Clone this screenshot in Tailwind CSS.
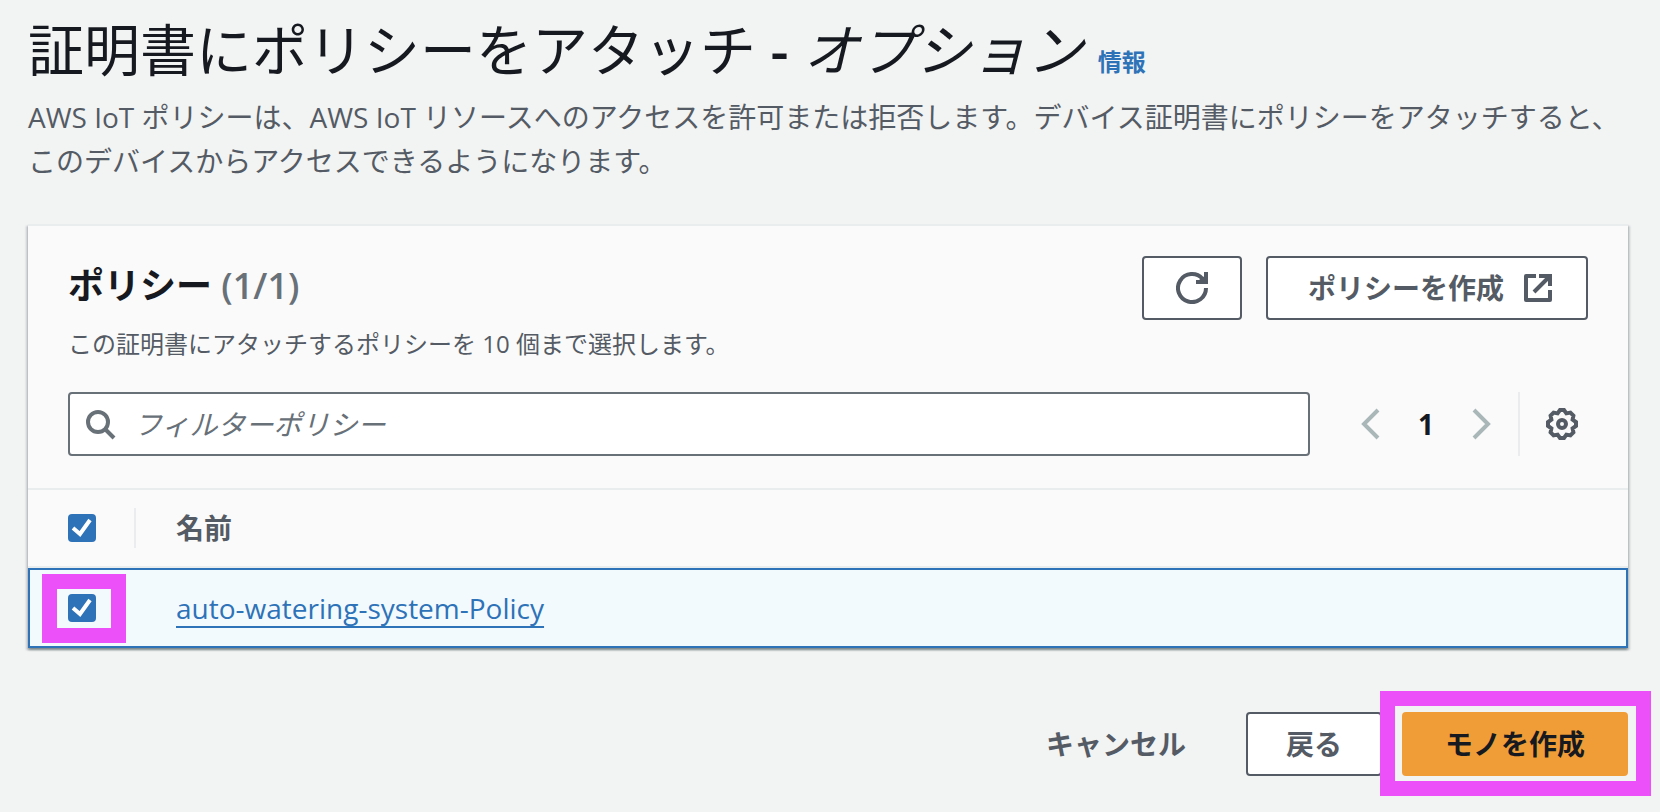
<!DOCTYPE html>
<html lang="ja">
<head>
    <meta charset="UTF-8">
    <meta name="viewport" content="width=device-width, initial-scale=1.0">
    <title>証明書にポリシーをアタッチ</title>
    <script src="https://cdn.jsdelivr.net/npm/@tailwindcss/browser@4"></script>
</head>

<body class="bg-[#f2f3f3] min-h-screen px-7 pt-[13px] pb-9 font-['Open_Sans','Noto_Sans_CJK_JP',sans-serif] text-[28px] leading-11 text-[#545b64]">
  <header>
    <h1 class="text-[56px] leading-[72px] text-[#16191f]">
      証明書にポリシーをアタッチ <span class="font-semibold">-</span> <i>オプション</i>
      <a href="#" class="text-2xl font-bold text-[#2e72b8]">情報</a>
    </h1>
    <p class="mt-2.5">AWS IoT ポリシーは、AWS IoT リソースへのアクセスを許可または拒否します。デバイス証明書にポリシーをアタッチすると、このデバイスからアクセスできるようになります。</p>
  </header>

  <main class="mt-[41px] mr-1 bg-[#fafafa] border-t-2 border-[#eaeded] shadow-[0_2px_2px_0_rgba(0,28,36,0.3),2px_2px_2px_0_rgba(0,28,36,0.15),-2px_2px_2px_0_rgba(0,28,36,0.15)]">
    <div class="px-10 pt-[30px] pb-8">
      <div class="flex items-start justify-between">
        <div>
          <h2 class="text-4xl leading-[60px] font-bold text-[#16191f]">ポリシー <span class="font-semibold text-[#687078]">(1/1)</span></h2>
          <p class="mt-2 text-2xl leading-10">この証明書にアタッチするポリシーを 10 個まで選択します。</p>
        </div>
        <div class="flex gap-6">
          <button type="button" aria-label="更新" class="flex h-16 w-[100px] items-center justify-center rounded border-2 border-[#545b64] bg-white">
            <svg class="size-8" fill="none" stroke="currentColor" stroke-width="4" viewBox="0 0 32 32">
              <path d="M30 16a14 14 0 1 1-3.5-9.2"></path>
              <path d="M30 0v10H20"></path>
              <path d="M23 8l7-5v7z" stroke="none" fill="currentColor"></path>
            </svg>
          </button>
          <button type="button" class="flex h-16 items-center gap-5 rounded border-2 border-[#545b64] bg-white pr-[34px] pl-10 font-bold">
            ポリシーを作成
            <svg class="size-7" fill="none" stroke="currentColor" stroke-width="4" viewBox="0 0 28 28">
              <path stroke-linejoin="round" d="M12 2H2v24h24V16"></path>
              <path d="M15 2h11v10M26 2L10 18"></path>
            </svg>
          </button>
        </div>
      </div>

      <div class="mt-7 flex items-center">
        <label class="flex h-16 flex-1 items-center gap-4.5 rounded border-2 border-[#687078] bg-white px-3.5 text-[#687078]">
          <svg class="size-8" fill="none" stroke="currentColor" stroke-width="4" viewBox="0 0 32 32">
            <circle cx="14" cy="14" r="10"></circle>
            <path d="M21 21l9 9"></path>
          </svg>
          <input type="search" aria-label="フィルターポリシー" placeholder="フィルターポリシー" class="min-w-0 flex-1 outline-none placeholder:italic placeholder:text-[#687078]">
        </label>
        <nav class="ml-[45px] flex h-16 items-center gap-7">
          <button type="button" aria-label="前のページ" class="text-[#aab7b8]">
            <svg class="size-8" fill="none" stroke="currentColor" stroke-width="4" viewBox="0 0 32 32"><path d="M23 2L9 16l14 14"></path></svg>
          </button>
          <button type="button" class="w-[22px] font-bold text-[#16191f]">1</button>
          <button type="button" aria-label="次のページ" class="text-[#aab7b8]">
            <svg class="size-8" fill="none" stroke="currentColor" stroke-width="4" viewBox="0 0 32 32"><path d="M9 2l14 14L9 30"></path></svg>
          </button>
        </nav>
        <div class="ml-[21px] flex h-16 items-center border-l-2 border-[#eaeded] pr-[10px] pl-[26px]">
          <button type="button" aria-label="設定">
            <svg class="size-8" fill="none" stroke="currentColor" stroke-width="4" viewBox="0 0 32 32">
              <path d="M14 2h4l2.4 3.4 4-.8 3 3-.8 4L30 14v4l-3.4 2.4.8 4-3 3-4-.8L18 30h-4l-2.4-3.4-4 .8-3-3 .8-4L2 18v-4l3.4-2.4-.8-4 3-3 4 .8z"></path>
              <circle cx="16" cy="16" r="4"></circle>
            </svg>
          </button>
        </div>
      </div>
    </div>

    <table class="w-full border-separate border-spacing-0 border-t-2 border-[#eaeded] text-left">
      <thead>
        <tr class="h-[78px]">
          <th class="w-[108px] border-b-2 border-[#eaeded] p-0">
            <div class="flex h-10 items-center border-r-2 border-[#eaeded] pl-10">
              <span class="grid">
                <input type="checkbox" checked aria-label="すべて選択" class="col-start-1 row-start-1 size-7 appearance-none rounded bg-[#2e72b8]">
                <svg class="pointer-events-none col-start-1 row-start-1 size-7" fill="none" stroke="white" stroke-width="4" viewBox="0 0 28 28"><path d="M5 14l7 6L22 6"></path></svg>
              </span>
            </div>
          </th>
          <th class="border-b-2 border-[#eaeded] p-0 pl-10 font-bold">名前</th>
        </tr>
      </thead>
      <tbody>
        <tr class="h-20 bg-[#f2fafd] outline-2 -outline-offset-2 outline-[#2e72b8]">
          <td class="p-0 pl-10">
            <span class="relative grid w-7">
              <input type="checkbox" checked aria-label="auto-watering-system-Policy を選択" class="col-start-1 row-start-1 size-7 appearance-none rounded bg-[#2e72b8]">
              <svg class="pointer-events-none col-start-1 row-start-1 size-7" fill="none" stroke="white" stroke-width="4" viewBox="0 0 28 28"><path d="M5 14l7 6L22 6"></path></svg>
              <span class="pointer-events-none absolute -top-5 -right-[30px] -bottom-[21px] -left-[26px] border-[15px] border-[#ec50f8]"></span>
            </span>
          </td>
          <td class="p-0 pl-10"><a href="#" class="text-[#2e72b8] underline decoration-2 underline-offset-[7px] [text-decoration-skip-ink:none]">auto-watering-system-Policy</a></td>
        </tr>
      </tbody>
    </table>
  </main>

  <footer class="mt-16 mr-1 flex justify-end gap-5 font-bold">
    <button type="button" class="h-16 px-10">キャンセル</button>
    <button type="button" class="h-16 rounded border-2 border-[#545b64] bg-white px-[38px]">戻る</button>
    <div class="relative">
      <button type="submit" class="block h-16 rounded bg-[#f09d37] px-[43px] text-[#16191f]">モノを作成</button>
      <span class="pointer-events-none absolute -top-[21px] -right-[23px] -bottom-5 -left-[22px] border-[15px] border-[#ec50f8]"></span>
    </div>
  </footer>
</body>
</html>
